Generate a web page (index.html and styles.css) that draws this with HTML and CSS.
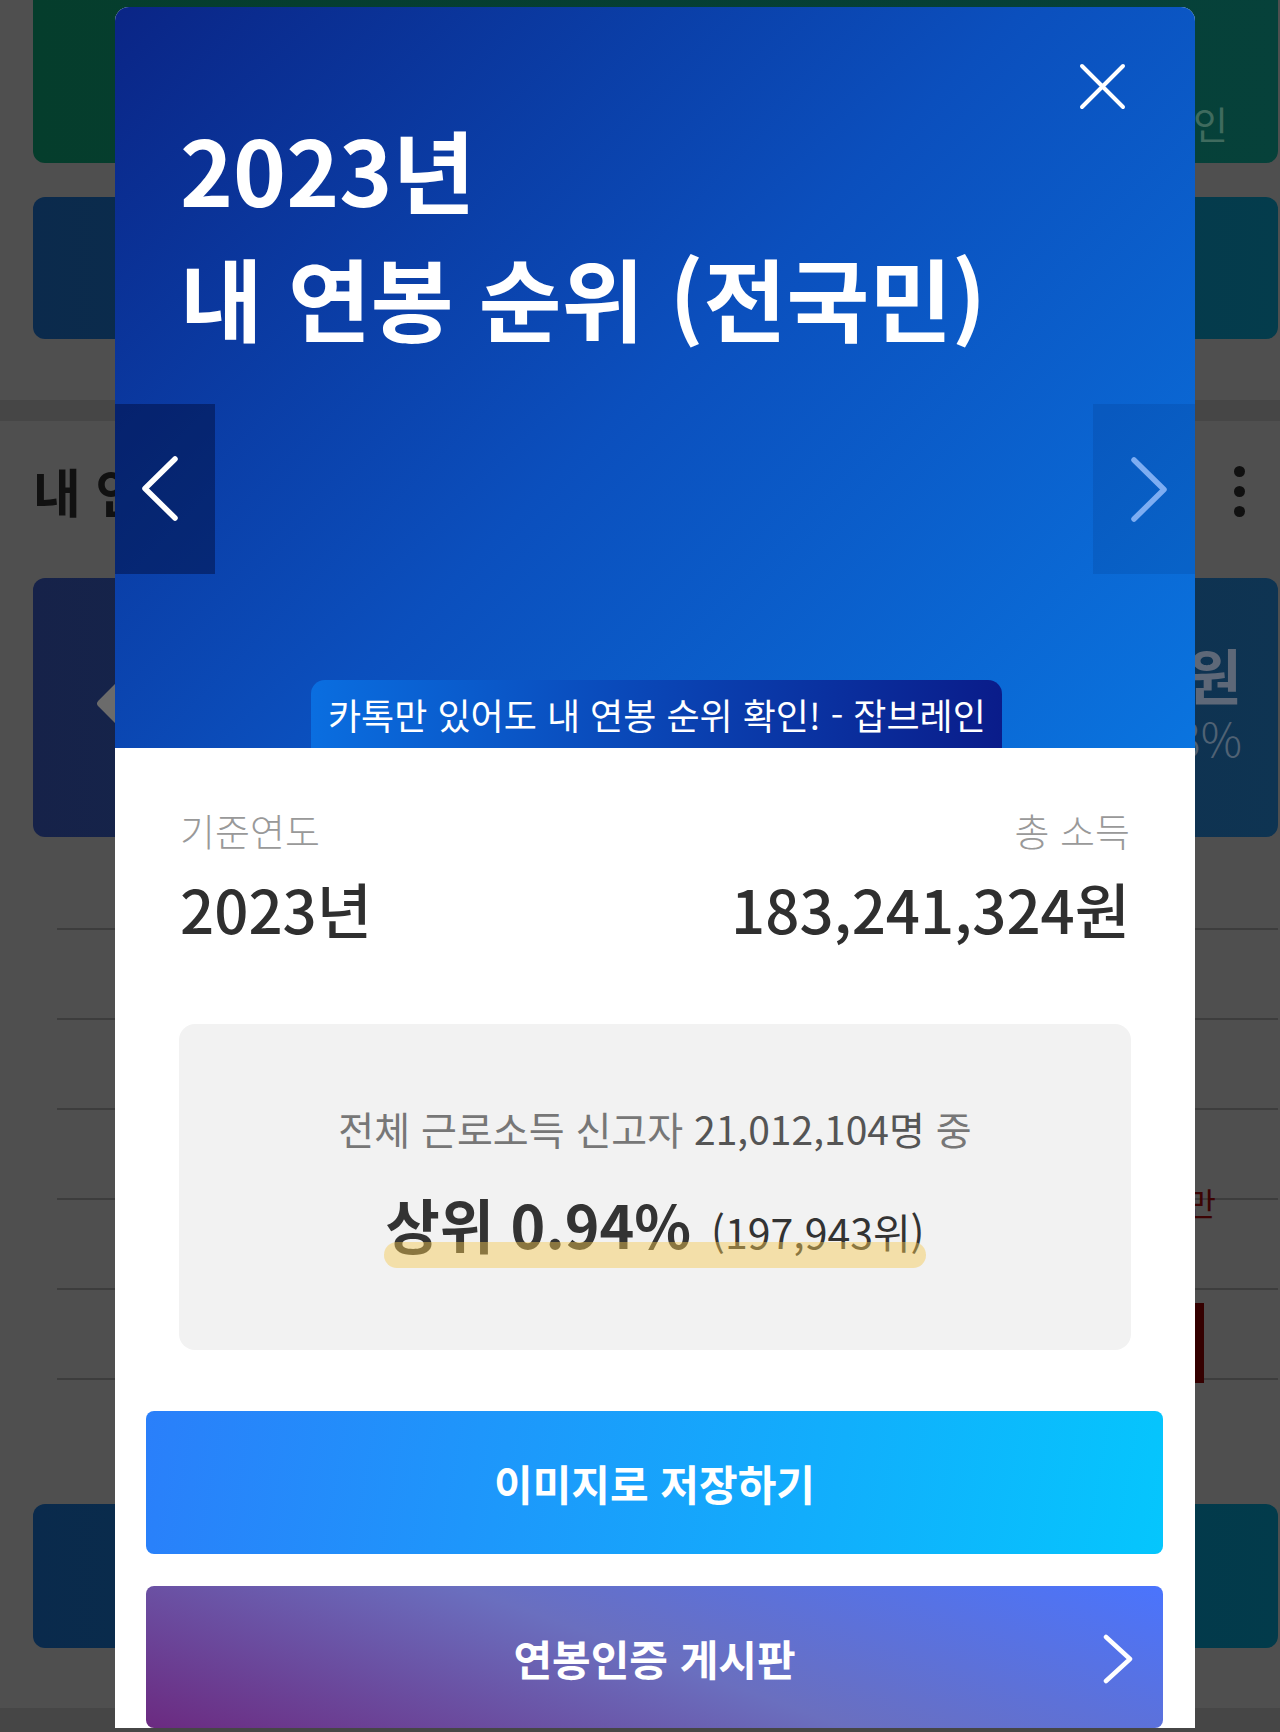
FILE: index.html
```html
<!DOCTYPE html>
<html lang="ko">
<head>
    <meta charset="UTF-8">
    <meta name="viewport" content="width=device-width, initial-scale=1.0">
    <title>내 연봉 순위</title>
    <link rel="stylesheet" href="styles.css">
</head>
<body>

<div class="page">
    <div class="top-cards">
        <div class="card card-green"><span class="card-note">인</span></div>
        <div class="card card-blue"></div>
    </div>
    <div class="band"></div>
    <div class="rank-section">
        <div class="section-head">
            <h2>내 연봉 순위</h2>
            <span class="more"><i></i><i></i><i></i></span>
        </div>
        <div class="card card-navy">
            <span class="diamond"></span>
            <div class="figure"><b>원</b><span>3%</span></div>
        </div>
        <ul class="rows">
            <li></li>
            <li></li>
            <li></li>
            <li><span class="row-label">만</span></li>
            <li></li>
            <li><span class="bar"></span></li>
        </ul>
        <div class="card card-teal"></div>
    </div>
    <div class="band band-bottom"></div>
</div>

<div class="modal">
    <div class="hero">
        <h1>2023년<br>내 연봉 순위 (전국민)</h1>
        <button class="close" aria-label="닫기">
            <svg width="47" height="47" viewBox="0 0 47 47"><path d="M3 3L44 44M44 3L3 44" stroke="#fff" stroke-width="4" stroke-linecap="round" fill="none"/></svg>
        </button>
        <button class="slide prev" aria-label="이전">
            <svg width="100" height="170" viewBox="0 0 100 170"><path d="M60 55L30 84.5L60 114" stroke="#fff" stroke-width="5.5" stroke-linecap="round" stroke-linejoin="round" fill="none"/></svg>
        </button>
        <button class="slide next" aria-label="다음">
            <svg width="102" height="170" viewBox="0 0 102 170"><path d="M41 56L71 85.5L41 115" stroke="#7dadf2" stroke-width="5.5" stroke-linecap="round" stroke-linejoin="round" fill="none"/></svg>
        </button>
        <div class="caption">카톡만 있어도 내 연봉 순위 확인! - 잡브레인</div>
    </div>

    <div class="sheet">
        <div class="info">
            <div class="info-col">
                <span class="label">기준연도</span>
                <span class="value">2023년</span>
            </div>
            <div class="info-col right">
                <span class="label">총 소득</span>
                <span class="value">183,241,324원</span>
            </div>
        </div>

        <div class="rank-box">
            <p class="rank-total">전체 근로소득 신고자 <b>21,012,104명</b> 중</p>
            <div class="rank-line">
                <span class="hl"><strong>상위 0.94%</strong><em>(197,943위)</em></span>
            </div>
        </div>

        <button class="btn btn-save">이미지로 저장하기</button>
        <button class="btn btn-board">연봉인증 게시판
            <svg width="30" height="50" viewBox="0 0 30 50"><path d="M3 3L27 25L3 47" stroke="#fff" stroke-width="4.5" stroke-linecap="round" stroke-linejoin="round" fill="none"/></svg>
        </button>
    </div>
</div>

</body>
</html>
```

FILE: styles.css
```css
html, body {
    margin: 0;
    padding: 0;
    height: 1732px;
    overflow: hidden;
}
body {
    position: relative;
    background: #4f4f4f;
    font-family: "Noto Sans CJK KR", "Noto Sans", sans-serif;
}

/* page behind the popup (dimmed) */
.page { width: 1280px; }
.top-cards {
    display: flex;
    flex-direction: column;
    gap: 34px;
    padding: 0 2px 0 33px;
}
.card { border-radius: 12px; }
.card-green {
    box-sizing: border-box;
    height: 183px;
    margin-top: -20px;
    padding: 0 50px 16px 0;
    display: flex;
    justify-content: flex-end;
    align-items: flex-end;
    background: linear-gradient(to right, #053d2c, #06413a);
}
.card-note {
    font-size: 38px;
    line-height: 49px;
    color: #3f6b5e;
}
.card-blue {
    height: 142px;
    background: linear-gradient(to right, #0b2a4c, #043c4c);
}
.band {
    height: 21px;
    margin-top: 61px;
    background: #464646;
}
.band-bottom { height: 24px; margin-top: 60px; }

.rank-section { padding: 36px 2px 0 33px; }
.section-head {
    display: flex;
    align-items: center;
    height: 68px;
}
.section-head h2 {
    margin: 0;
    font-size: 52px;
    line-height: 68px;
    font-weight: 700;
    color: #111;
}
.more {
    margin-left: auto;
    margin-right: 33px;
    display: flex;
    flex-direction: column;
    gap: 9px;
}
.more i {
    width: 11px;
    height: 11px;
    border-radius: 50%;
    background: #111;
}
.card-navy {
    height: 259px;
    margin-top: 53px;
    display: flex;
    align-items: center;
    background: linear-gradient(to right, #162249, #0e3452);
}
.diamond {
    width: 41px;
    height: 41px;
    margin: 0 0 9px 71px;
    border-radius: 4px;
    background: #6b6b6b;
    transform: rotate(45deg);
}
.figure {
    margin-left: auto;
    padding: 0 36px 11px 0;
    display: flex;
    flex-direction: column;
    align-items: flex-end;
    gap: 10px;
}
.figure b {
    font-size: 60px;
    line-height: 60px;
    color: #5e6878;
}
.figure span {
    font-size: 46px;
    line-height: 46px;
    font-weight: 300;
    color: #506274;
}
.rows {
    list-style: none;
    margin: 3px 0 0 24px;
    padding: 0;
}
.rows li {
    position: relative;
    height: 88px;
    border-bottom: 2px solid #3d3d3d;
}
.row-label {
    position: absolute;
    top: 76px;
    right: 62px;
    font-size: 32px;
    line-height: 32px;
    color: #3c0303;
}
.bar {
    position: absolute;
    top: 13px;
    right: 74px;
    width: 60px;
    height: 80px;
    background: #350000;
}
.card-teal {
    height: 144px;
    margin-top: 124px;
    background: linear-gradient(to right, #0a2a4c, #023b4b);
}

/* popup */
.modal {
    position: absolute;
    top: 7px;
    left: 115px;
    width: 1080px;
    background: #fff;
    border-radius: 14px 14px 0 0;
    overflow: hidden;
}
.hero {
    position: relative;
    box-sizing: border-box;
    height: 741px;
    padding: 97px 65px 0;
    background: linear-gradient(135deg, #0a2586 0%, #0b4fbd 50%, #0a74df 100%);
}
.hero h1 {
    margin: 0;
    color: #fff;
    font-size: 90px;
    line-height: 128px;
    font-weight: 700;
}
.hero button {
    border: 0;
    padding: 0;
    background: none;
    cursor: pointer;
}
.hero svg { display: block; }
.close {
    position: absolute;
    top: 56px;
    left: 964px;
}
.slide {
    position: absolute;
    top: 397px;
    height: 170px;
}
.hero .prev { left: 0; width: 100px; background: rgba(0, 8, 50, 0.45); }
.hero .next { right: 0; width: 102px; background: rgba(0, 10, 60, 0.1); }
.caption {
    position: absolute;
    left: 196px;
    bottom: 0;
    height: 68px;
    padding: 0 16px 0 17px;
    border-radius: 14px 14px 0 0;
    background: linear-gradient(to right, #0a6ee0, #0a1c8a);
    color: #fff;
    font-size: 36px;
    line-height: 68px;
    white-space: nowrap;
}

.sheet { padding: 56px 65px 0; }
.info {
    display: flex;
    justify-content: space-between;
}
.info-col {
    display: flex;
    flex-direction: column;
}
.info-col.right { align-items: flex-end; }
.label {
    font-size: 38px;
    line-height: 52px;
    font-weight: 300;
    color: #999;
}
.value {
    margin-top: 13px;
    font-size: 60px;
    line-height: 78px;
    font-weight: 500;
    color: #2f2f2f;
}
.rank-box {
    margin: 77px -1px 0;
    padding: 76px 0 79px;
    border-radius: 16px;
    background: #f2f2f2;
    text-align: center;
}
.rank-total {
    margin: 0;
    font-size: 39px;
    line-height: 56px;
    color: #777;
}
.rank-total b { font-weight: 400; color: #555; }
.rank-line {
    margin-top: 28px;
    display: flex;
    justify-content: center;
}
.hl {
    position: relative;
    display: flex;
    align-items: baseline;
    line-height: 80px;
}
.hl strong {
    font-size: 59px;
    font-weight: 700;
    color: #333;
}
.hl em {
    margin-left: 20px;
    font-style: normal;
    font-size: 41px;
    color: #333;
}
.hl::after {
    content: '';
    position: absolute;
    left: -2px;
    right: -2px;
    top: 58px;
    height: 26px;
    border-radius: 13px;
    background: rgba(245, 200, 80, 0.45);
}

.btn {
    display: block;
    position: relative;
    width: calc(100% + 67px);
    height: 143px;
    margin-left: -34px;
    border: 0;
    border-radius: 8px;
    color: #fff;
    font-family: inherit;
    font-size: 42px;
    font-weight: 700;
    cursor: pointer;
}
.btn-save {
    margin-top: 61px;
    background: linear-gradient(100deg, #2a7ffa, #05c6fd);
}
.btn-board {
    height: 142px;
    margin-top: 32px;
    background: linear-gradient(20deg, #6b2a80 0%, #6a6fbf 50%, #4a74fd 100%);
}
.btn-board svg {
    position: absolute;
    left: 957px;
    top: 48px;
}
```
